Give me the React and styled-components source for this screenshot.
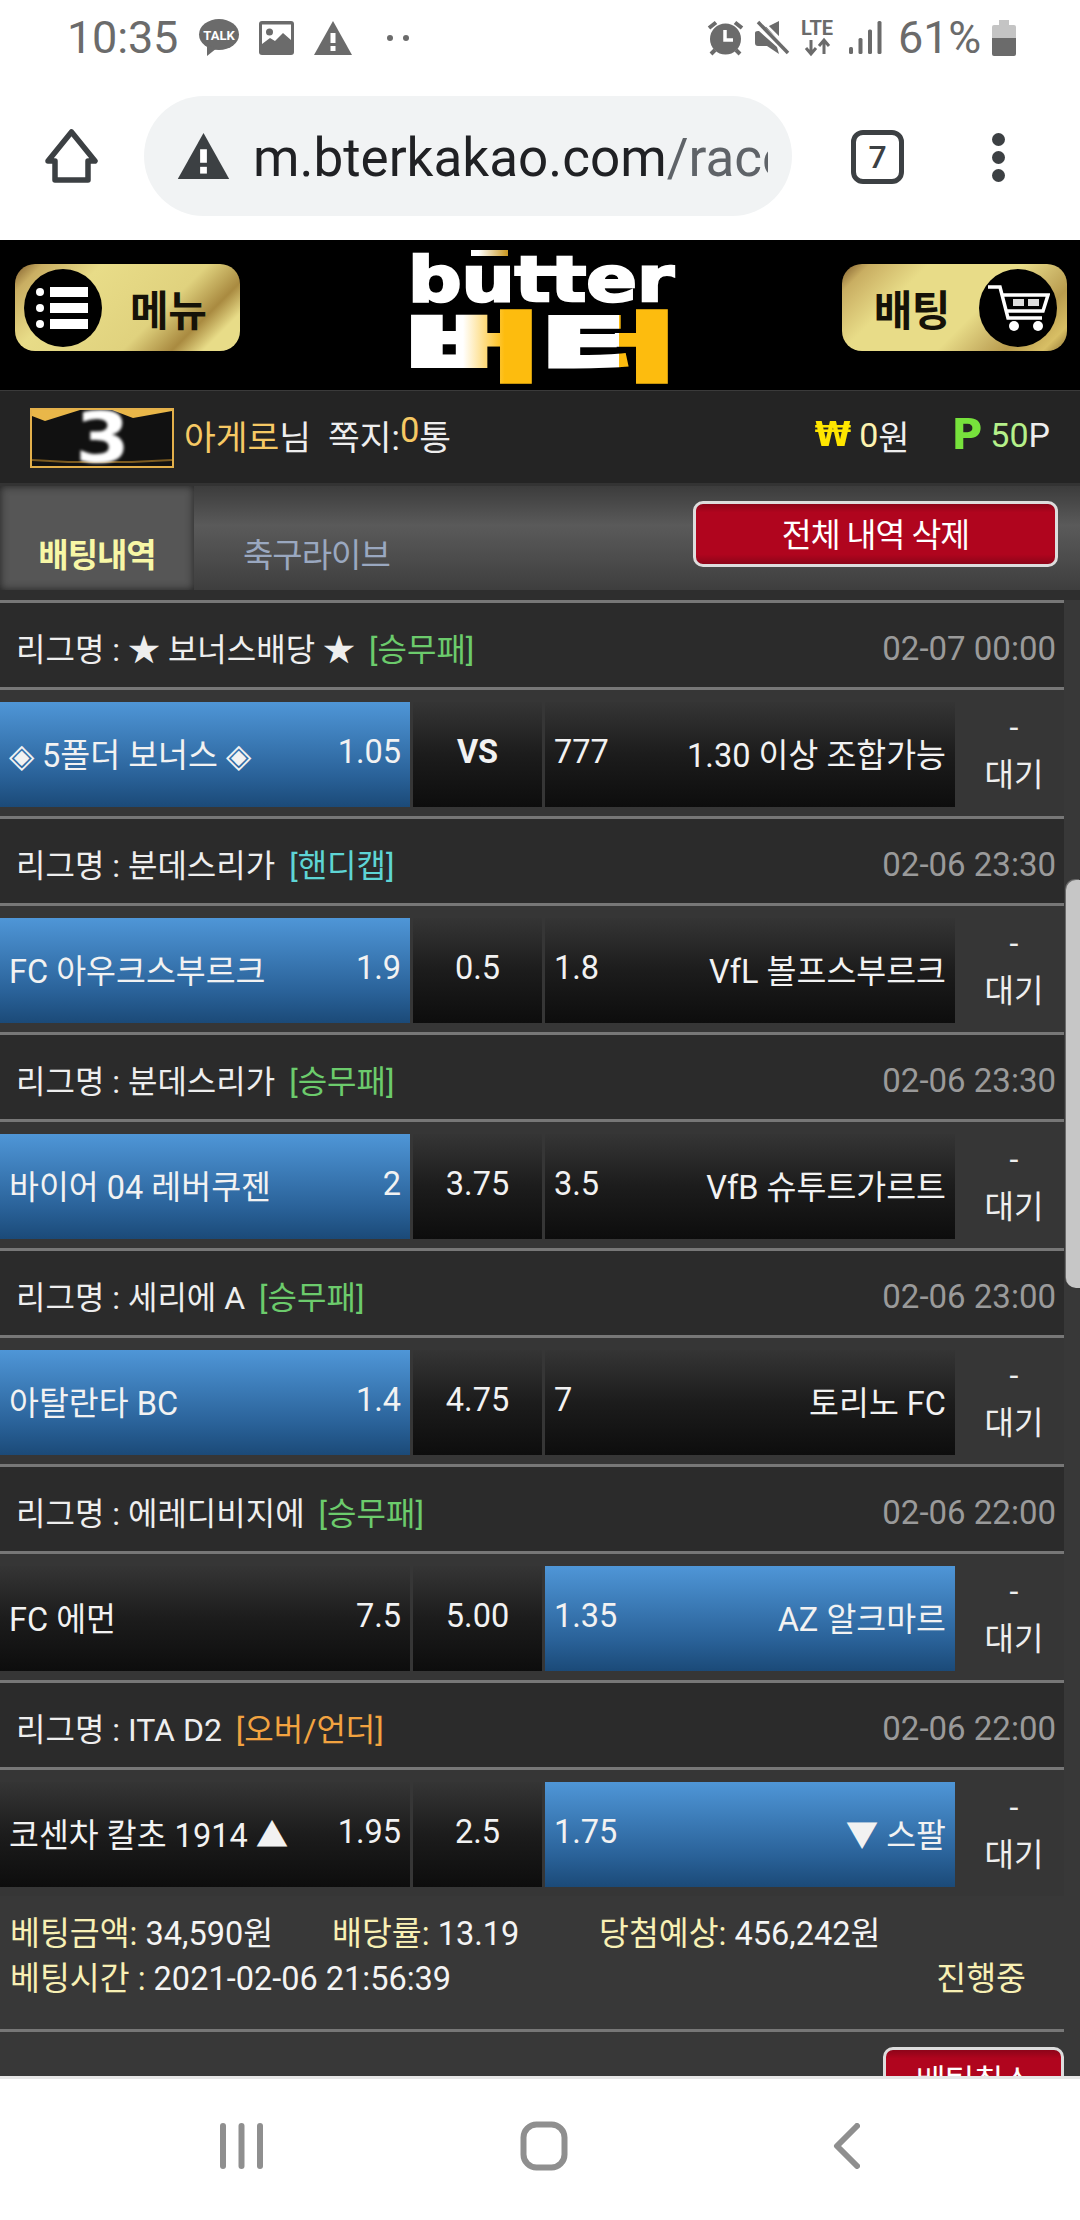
import React from 'react';
import styled, { createGlobalStyle } from 'styled-components';

const Global = createGlobalStyle`
  html, body { margin: 0; padding: 0; background: #fff; }
  * { box-sizing: border-box; }
`;

const KR = `Roboto, "Noto Sans CJK KR", sans-serif`;

const Screen = styled.div`
  width: 1080px; height: 2220px; display: flex; flex-direction: column; overflow: hidden;
  background: #fff; font-family: ${KR}; position: relative;
`;

const StatusBar = styled.div`
  height: 72px; flex: none; display: flex; align-items: center; padding: 3px 64px 0 67px; color: #6b6b6b;
`;
const StatusText = styled.span`
  font-size: 45px; line-height: 66px; letter-spacing: -0.2px; margin-right: ${p => p.$mr || 0}px;
`;
const StatusIcon = styled.svg`
  flex: none; display: block; overflow: visible; margin-right: ${p => p.$mr || 0}px;
`;
const StatusRight = styled.div`
  margin-left: auto; display: flex; align-items: center;
`;

const Toolbar = styled.div`
  height: 168px; flex: none; display: flex; align-items: center; padding-left: 45px;
`;
const HomeGlyph = styled.svg` flex: none; `;
const AddressPill = styled.div`
  width: 648px; height: 120px; border-radius: 60px; background: #f1f3f4; margin: 0 59px 0 46px;
  display: flex; align-items: center; padding-left: 32px; flex: none;
`;
const Url = styled.div`
  margin-left: 22px; margin-top: 4px; width: 515px; overflow: hidden; white-space: nowrap; font-size: 53px; line-height: 70px; color: #202124;
  span { color: #5f6368; }
`;
const TabCount = styled.div`
  width: 53px; height: 54px; border: 5px solid #3c4043; border-radius: 12px; flex: none; margin-top: 2px;
  display: flex; align-items: center; justify-content: center; font-size: 32px; font-weight: 500; color: #3c4043;
`;
const MenuDots = styled.div`
  margin-left: 88px; display: flex; flex-direction: column; gap: 5px; margin-top: 2px;
  i { display: block; width: 13px; height: 13px; border-radius: 50%; background: #3c4043; }
`;

const Viewport = styled.div`
  flex: 1; min-height: 0; overflow: hidden; background: #383838; position: relative;
`;

const SiteHeader = styled.div`
  height: 150px; background: #000; display: flex; justify-content: space-between; align-items: flex-start;
  padding: 10px 13px 0 15px;
`;
const GoldButton = styled.div`
  width: 225px; height: 87px; margin-top: 14px; border-radius: 20px; display: flex; align-items: center;
  justify-content: ${p => (p.$right ? 'flex-end' : 'flex-start')};
  padding: ${p => (p.$right ? '0 10px 0 0' : '0 0 0 9px')};
  gap: ${p => (p.$right ? '29px' : '28px')};
  background: ${p => p.$right
    ? 'linear-gradient(135deg, #7d5a2a 0%, #c9ae62 9%, #e8dc88 28%, #e8dc88 58%, #c9b265 72%, #b99c4d 80%, #d8bf65 92%, #8f7434 100%)'
    : 'linear-gradient(135deg, #7d5a2a 0%, #c9ae62 9%, #e8dc88 28%, #e0d27e 62%, #a98a40 78%, #e8dc88 88%, #e8dc88 100%)'};
  color: #151208; font-size: 42px; font-weight: 700; letter-spacing: -0.5px;
`;
const GoldCircle = styled.div`
  width: 78px; height: 78px; border-radius: 50%; background: #000; flex: none;
  display: flex; align-items: center; justify-content: center;
`;
const Logo = styled.svg`
  display: block; flex: none; overflow: visible;
`;
const SoftGlyph = styled.svg`
  filter: blur(.6px);
`;

const UserRow = styled.div`
  height: 96px; background: #242424; border-top: 1px solid #3a3a3a; border-bottom: 3px solid #333;
  display: flex; align-items: center; padding: 2px 30px 0 30px; font-size: 34.5px; color: #eee;
`;
const LevelBadge = styled.div`
  width: 144px; height: 60px; border: 2px solid #e3b04b; background: #111; position: relative; overflow: hidden;
  display: flex; align-items: center; justify-content: center; flex: none; margin-right: 10px;
`;
const LevelArt = styled.svg`
  position: absolute; inset: 0;
`;
const LevelNum = styled.span`
  position: relative; color: #fff; font: 700 56px/56px "DejaVu Sans", sans-serif; transform: scale(1.4, 1.24);
  filter: blur(1.2px);
`;
const UserText = styled.div`
  display: flex; margin-top: -6px; white-space: nowrap;
`;
const Gold = styled.span` color: ${p => p.$c || '#f6c964'}; `;
const Wallet = styled.div`
  margin-left: auto; display: flex; align-items: center; margin-top: -6px; white-space: nowrap; font-size: 34px;
`;
const Sign = styled.span`
  font: 700 ${p => p.$size}px/40px "DejaVu Sans", sans-serif; color: ${p => p.$c}; filter: blur(.6px);
  margin: ${p => p.$m};
`;

const TabBar = styled.div`
  height: 104px; display: flex; position: relative;
  background: linear-gradient(180deg, #3c3c3c 0%, #5a5a5a 38%, #4c4c4c 70%, #3e3e3e 100%);
`;
const Tab = styled.div`
  display: flex; align-items: flex-end; padding-bottom: 12px; font-size: 33px; line-height: 45px; letter-spacing: -1px;
  ${p => p.$active ? `
    width: 194px; justify-content: center; background: #565656; color: #f7f7a6; font-weight: 700;
    box-shadow: inset 0 0 9px #222;
  ` : `
    padding-left: 49px; color: #9aa8c0;
  `}
`;
const RedButton = styled.div`
  border: 3px solid #ddd; border-radius: 10px; color: #fff;
  background: linear-gradient(180deg, #8d0519 0%, #b0051e 14%, #b0051e 84%, #8d0519 100%);
  display: flex; align-items: center; justify-content: center; white-space: nowrap; padding-bottom: 3px;
  font-size: 32.5px; letter-spacing: -1px;
  width: ${p => p.$w}px; height: 66px;
`;
const TabAction = styled.div`
  margin: 15px 22px 0 auto;
`;
const TabGap = styled.div`
  height: 10px; background: #2e2e2e;
`;

const List = styled.div` width: 1064px; `;
const Rule = styled.div` height: 3px; background: #777; `;
const LeagueHead = styled.div`
  height: 84px; background: #2b2b2b; display: flex; align-items: center; justify-content: space-between;
  padding: 4px 8px 0 16px; font-size: 32px; color: #eee; white-space: nowrap;
`;
const TagText = styled.span` color: ${p => p.$c}; margin-left: 14px; `;
const DateText = styled.span` color: #9a9a9a; font-size: 33px; margin-top: 2px; `;
const BetRow = styled.div`
  display: grid; grid-template-columns: 410px 129px 410px 109px; column-gap: 3px; padding: 12px 0 9px;
  background: #363636; height: 126px; width: 1064px;
`;
const Cell = styled.div`
  height: 105px; display: flex; align-items: center; justify-content: ${p => p.$center ? 'center' : 'space-between'};
  padding: 0 9px 5px 9px; color: #f2f2f2; font-size: 32.5px; white-space: nowrap;
  font-weight: ${p => p.$bold ? 700 : 400};
  background: ${p => p.$picked
    ? 'linear-gradient(180deg, #4f96d7 0%, #3c7cb8 35%, #2a6299 70%, #1b4a78 100%)'
    : 'linear-gradient(180deg, #353535 0%, #1c1c1c 50%, #0d0d0d 100%)'};
`;
const StatusCell = styled.div`
  display: flex; flex-direction: column; align-items: center; color: #eee; font-size: 32px; line-height: 48px;
  margin-left: 3px; height: 105px; padding-top: 1px;
`;
const Summary = styled.div`
  padding: 16px 0 27px 10px; background: #383838; font-size: 32.5px; line-height: 45px; color: #f4f4f4;
`;
const SummaryTop = styled.div`
  display: grid; grid-template-columns: 322px 267px 1fr;
`;
const SummaryBottom = styled.div`
  display: flex; justify-content: space-between; padding-right: 38px;
`;
const Label = styled.span` color: #f8f0b4; `;
const CancelRow = styled.div`
  display: flex; justify-content: flex-end; padding-top: 15px;
`;
const ScrollThumb = styled.div`
  position: absolute; right: 0; top: 640px; width: 14px; height: 408px; background: #c6c6c6;
  border-radius: 10px 0 0 10px; box-shadow: -1px -1px 0 #6a6a6a;
`;

const NavBar = styled.div`
  height: 144px; flex: none; background: #fff; border-top: 3px solid #e6e6e6;
  display: flex; align-items: center; padding: 0 220px 8px 220px; justify-content: space-between;
`;
const NavGlyph = styled.svg`
  flex: none; margin-right: ${p => p.$mr || 0}px;
`;

const TalkIcon = () => (
  <StatusIcon $mr={20} width="40" height="37" viewBox="0 0 40 37">
    <ellipse cx="20" cy="15.5" rx="20" ry="15.5" fill="#6b6b6b" />
    <path d="M8 26 L8 37 L18 29 Z" fill="#6b6b6b" />
    <text x="20" y="21" textAnchor="middle" fontFamily="Roboto" fontWeight="700" fontSize="13" fill="#fff">TALK</text>
  </StatusIcon>
);
const ImageIcon = () => (
  <StatusIcon $mr={20} width="35" height="34" viewBox="0 0 35 34">
    <rect width="35" height="34" rx="3" fill="#6b6b6b" />
    <rect x="3" y="3.5" width="29" height="25" fill="#fff" />
    <circle cx="10.5" cy="11" r="3.5" fill="#6b6b6b" />
    <path d="M3 23 L11 17 L16 20 L24 12 L32 19 L32 30 L3 30 Z" fill="#6b6b6b" />
  </StatusIcon>
);
const WarnIcon = ({ w, h, c, mr }) => (
  <StatusIcon $mr={mr} width={w} height={h} viewBox="0 0 38 34">
    <path d="M19 0 L38 34 L0 34 Z" fill={c} strokeLinejoin="round" />
    <rect x="16.5" y="12" width="5" height="10" fill="#fff" />
    <rect x="16.5" y="25" width="5" height="5" fill="#fff" />
  </StatusIcon>
);
const DotsIcon = () => (
  <StatusIcon width="24" height="8" viewBox="0 0 24 8">
    <circle cx="4" cy="4" r="3" fill="#6b6b6b" /><circle cx="20" cy="4" r="3" fill="#6b6b6b" />
  </StatusIcon>
);
const AlarmIcon = () => (
  <StatusIcon $mr={10} width="39" height="36" viewBox="0 0 39 36">
    <circle cx="19.5" cy="19" r="15.5" fill="#6b6b6b" />
    <path d="M3 8 L10 2.5 M36 8 L29 2.5 M9 30 L5 34 M30 30 L34 34" stroke="#6b6b6b" strokeWidth="4" fill="none" />
    <path d="M19 10 V20 H27" stroke="#fff" strokeWidth="3.5" fill="none" />
  </StatusIcon>
);
const MuteIcon = () => (
  <StatusIcon $mr={10} width="34" height="35" viewBox="0 0 34 35">
    <path d="M24 1 V19 L10 7 L14 6 Z M0 13 Q0 11 3 11 L4 11 L22 27 L24 34 L12 26 H3 Q0 26 0 23 Z" fill="#6b6b6b" />
    <path d="M3 2 L33 33" stroke="#6b6b6b" strokeWidth="3.5" />
    <path d="M7 1 L34 28" stroke="#fff" strokeWidth="2.5" />
  </StatusIcon>
);
const LteIcon = () => (
  <StatusIcon $mr={14} width="36" height="37" viewBox="0 0 36 37">
    <text x="18" y="16" textAnchor="middle" fontFamily="Roboto" fontWeight="700" fontSize="20" fill="#6b6b6b">LTE</text>
    <path d="M12 21 V34 M7 29 L12 35 L17 29 M25 35 V22 M20 27 L25 21 L30 27" stroke="#6b6b6b" strokeWidth="3" fill="none" />
  </StatusIcon>
);
const SignalIcon = () => (
  <StatusIcon $mr={16} width="33" height="33" viewBox="0 0 33 33">
    <rect x="0" y="26" width="4" height="7" rx="1.5" fill="#6b6b6b" />
    <rect x="9.5" y="17" width="4" height="16" rx="1.5" fill="#6b6b6b" />
    <rect x="19" y="8.5" width="4" height="24.5" rx="1.5" fill="#6b6b6b" />
    <rect x="28.5" y="0" width="4" height="33" rx="1.5" fill="#6b6b6b" />
  </StatusIcon>
);
const BatteryIcon = () => (
  <StatusIcon width="24" height="36" viewBox="0 0 24 36">
    <path d="M7 0 H17 V5 H22 Q24 5 24 7 V18 H0 V7 Q0 5 2 5 H7 Z" fill="#c4c4c4" />
    <path d="M0 18 H24 V34 Q24 36 22 36 H2 Q0 36 0 34 Z" fill="#6b6b6b" />
  </StatusIcon>
);
const HomeIcon = () => (
  <HomeGlyph width="53" height="54" viewBox="0 0 53 54">
    <path d="M26.5 3 L50 32 H43 V51 H10 V32 H3 Z" fill="none" stroke="#3c4043" strokeWidth="5.5" strokeLinejoin="round" />
  </HomeGlyph>
);
const ListGlyph = () => (
  <SoftGlyph width="56" height="44" viewBox="0 0 56 44">
    {[6, 22, 38].map(y => (
      <g key={y}>
        <circle cx="5" cy={y} r="4" fill="#fff" />
        <rect x="15" y={y - 5} width="38" height="10" fill="#fff" />
      </g>
    ))}
  </SoftGlyph>
);
const CartGlyph = () => (
  <SoftGlyph width="64" height="48" viewBox="0 0 64 48">
    <path d="M2 3 H14 L22 34 H56 M16 11 H62 L57 27 H20" fill="none" stroke="#fff" strokeWidth="3.5" />
    <rect x="27" y="15" width="11" height="7" fill="#ddd" />
    <rect x="42" y="15" width="11" height="7" fill="#ddd" />
    <circle cx="28" cy="42" r="5" fill="#fff" />
    <circle cx="52" cy="42" r="5" fill="#fff" />
  </SoftGlyph>
);

const ButterLogo = () => (
  <Logo width="260" height="134" viewBox="0 0 260 134">
    <defs>
      <linearGradient id="hangul" gradientUnits="userSpaceOnUse" x1="0" x2="260" y1="0" y2="0">
        <stop offset="0" stopColor="#fff" />
        <stop offset="0.2" stopColor="#fff" />
        <stop offset="0.36" stopColor="#fdbc0e" />
        <stop offset="0.5" stopColor="#fdbc0e" />
        <stop offset="0.5" stopColor="#fff" />
        <stop offset="0.8" stopColor="#fff" />
        <stop offset="0.8" stopColor="#fdbc0e" />
        <stop offset="1" stopColor="#fdbc0e" />
      </linearGradient>
      <linearGradient id="macron" x1="0" x2="1" y1="0" y2="0">
        <stop offset="0.2" stopColor="#fff" />
        <stop offset="1" stopColor="#c8961e" />
      </linearGradient>
    </defs>
    <rect x="60" y="0" width="37" height="6" fill="url(#macron)" />
    <text x="-3" y="51" textLength="266" lengthAdjust="spacingAndGlyphs" fontFamily="DejaVu Sans" fontWeight="700" fontSize="62" fill="#fff" stroke="#fff" strokeWidth="2.5">butter</text>
    <text x="-6" y="124" textLength="272" lengthAdjust="spacingAndGlyphs" fontFamily="Noto Sans CJK KR" fontWeight="900" fontSize="74" fill="url(#hangul)" stroke="url(#hangul)" strokeWidth="4">버터</text>
  </Logo>
);

const BETS = [
  { league: '★ 보너스배당 ★', tag: '승무패', tagColor: '#6ccb6c', date: '02-07 00:00', home: '◈ 5폴더 보너스 ◈', homeOdds: '1.05', mid: 'VS', awayOdds: '777', away: '1.30 이상 조합가능', pick: 'home', boldMid: true },
  { league: '분데스리가', tag: '핸디캡', tagColor: '#5ed5d5', date: '02-06 23:30', home: 'FC 아우크스부르크', homeOdds: '1.9', mid: '0.5', awayOdds: '1.8', away: 'VfL 볼프스부르크', pick: 'home' },
  { league: '분데스리가', tag: '승무패', tagColor: '#6ccb6c', date: '02-06 23:30', home: '바이어 04 레버쿠젠', homeOdds: '2', mid: '3.75', awayOdds: '3.5', away: 'VfB 슈투트가르트', pick: 'home' },
  { league: '세리에 A', tag: '승무패', tagColor: '#6ccb6c', date: '02-06 23:00', home: '아탈란타 BC', homeOdds: '1.4', mid: '4.75', awayOdds: '7', away: '토리노 FC', pick: 'home' },
  { league: '에레디비지에', tag: '승무패', tagColor: '#6ccb6c', date: '02-06 22:00', home: 'FC 에먼', homeOdds: '7.5', mid: '5.00', awayOdds: '1.35', away: 'AZ 알크마르', pick: 'away' },
  { league: 'ITA D2', tag: '오버/언더', tagColor: '#f2a340', date: '02-06 22:00', home: '코센차 칼초 1914 ▲', homeOdds: '1.95', mid: '2.5', awayOdds: '1.75', away: '▼ 스팔', pick: 'away' },
];

const BetBlock = ({ bet }) => (
  <>
    <Rule />
    <LeagueHead>
      <span>리그명 : {bet.league}<TagText $c={bet.tagColor}>[{bet.tag}]</TagText></span>
      <DateText>{bet.date}</DateText>
    </LeagueHead>
    <Rule />
    <BetRow>
      <Cell $picked={bet.pick === 'home'}><span>{bet.home}</span><span>{bet.homeOdds}</span></Cell>
      <Cell $center $bold={bet.boldMid}>{bet.mid}</Cell>
      <Cell $picked={bet.pick === 'away'}><span>{bet.awayOdds}</span><span>{bet.away}</span></Cell>
      <StatusCell><span>-</span><span>대기</span></StatusCell>
    </BetRow>
  </>
);

export default function App() {
  return (
    <Screen>
      <Global />
      <StatusBar>
        <StatusText $mr={21}>10:35</StatusText>
        <TalkIcon />
        <ImageIcon />
        <WarnIcon w={38} h={34} c="#6b6b6b" mr={34} />
        <DotsIcon />
        <StatusRight>
          <AlarmIcon />
          <MuteIcon />
          <LteIcon />
          <SignalIcon />
          <StatusText $mr={11}>61%</StatusText>
          <BatteryIcon />
        </StatusRight>
      </StatusBar>
      <Toolbar>
        <HomeIcon />
        <AddressPill>
          <WarnIcon w={55} h={46} c="#3c4043" />
          <Url>m.bterkakao.com<span>/race</span></Url>
        </AddressPill>
        <TabCount>7</TabCount>
        <MenuDots><i /><i /><i /></MenuDots>
      </Toolbar>
      <Viewport>
        <SiteHeader>
          <GoldButton>
            <GoldCircle><ListGlyph /></GoldCircle>
            <span>메뉴</span>
          </GoldButton>
          <ButterLogo />
          <GoldButton $right>
            <span>배팅</span>
            <GoldCircle><CartGlyph /></GoldCircle>
          </GoldButton>
        </SiteHeader>
        <UserRow>
          <LevelBadge>
            <LevelArt width="140" height="56" viewBox="0 0 140 56">
              <path d="M0 0 H140 V1 L101 8 L80 0 H48 L13 11 L0 6 Z" fill="#e9b749" />
              <path d="M0 50 L36 52 H100 L140 50" fill="none" stroke="#7a5a20" strokeWidth="2" />
            </LevelArt>
            <LevelNum>3</LevelNum>
          </LevelBadge>
          <UserText>
            <Gold>아게로</Gold>님&nbsp;&nbsp;쪽지:<Gold>0</Gold>통
          </UserText>
          <Wallet>
            <Sign $size={33} $c="#ffe600" $m="0 8px 0 0">₩</Sign>
            <Gold $c="#fdf3b0">0</Gold>원
            <Sign $size={42} $c="#77e23c" $m="0 8px 0 42px">P</Sign>
            <Gold $c="#b5f08a">50</Gold>P
          </Wallet>
        </UserRow>
        <TabBar>
          <Tab $active>배팅내역</Tab>
          <Tab>축구라이브</Tab>
          <TabAction><RedButton $w={365}>전체 내역 삭제</RedButton></TabAction>
        </TabBar>
        <TabGap />
        <List>
          {BETS.map((b, i) => <BetBlock key={i} bet={b} />)}
          <Summary>
            <SummaryTop>
              <span><Label>베팅금액:</Label> 34,590원</span>
              <span><Label>배당률:</Label> 13.19</span>
              <span><Label>당첨예상:</Label> 456,242원</span>
            </SummaryTop>
            <SummaryBottom>
              <span><Label>베팅시간 :</Label> 2021-02-06 21:56:39</span>
              <Label>진행중</Label>
            </SummaryBottom>
          </Summary>
          <Rule />
          <CancelRow><RedButton $w={181}>베팅취소</RedButton></CancelRow>
        </List>
        <ScrollThumb />
      </Viewport>
      <NavBar>
        <NavGlyph width="43" height="46" viewBox="0 0 43 46">
          {[3, 21.5, 40].map(x => <rect key={x} x={x - 3} y="0" width="6" height="46" rx="3" fill="#8f8f8f" />)}
        </NavGlyph>
        <NavGlyph $mr={8} width="48" height="50" viewBox="0 0 48 50">
          <rect x="3.5" y="3.5" width="41" height="43" rx="13" fill="none" stroke="#8f8f8f" strokeWidth="6" />
        </NavGlyph>
        <NavGlyph width="27" height="46" viewBox="0 0 27 46">
          <path d="M24 3 L4 23 L24 43" fill="none" stroke="#8f8f8f" strokeWidth="6" strokeLinecap="round" strokeLinejoin="round" />
        </NavGlyph>
      </NavBar>
    </Screen>
  );
}
